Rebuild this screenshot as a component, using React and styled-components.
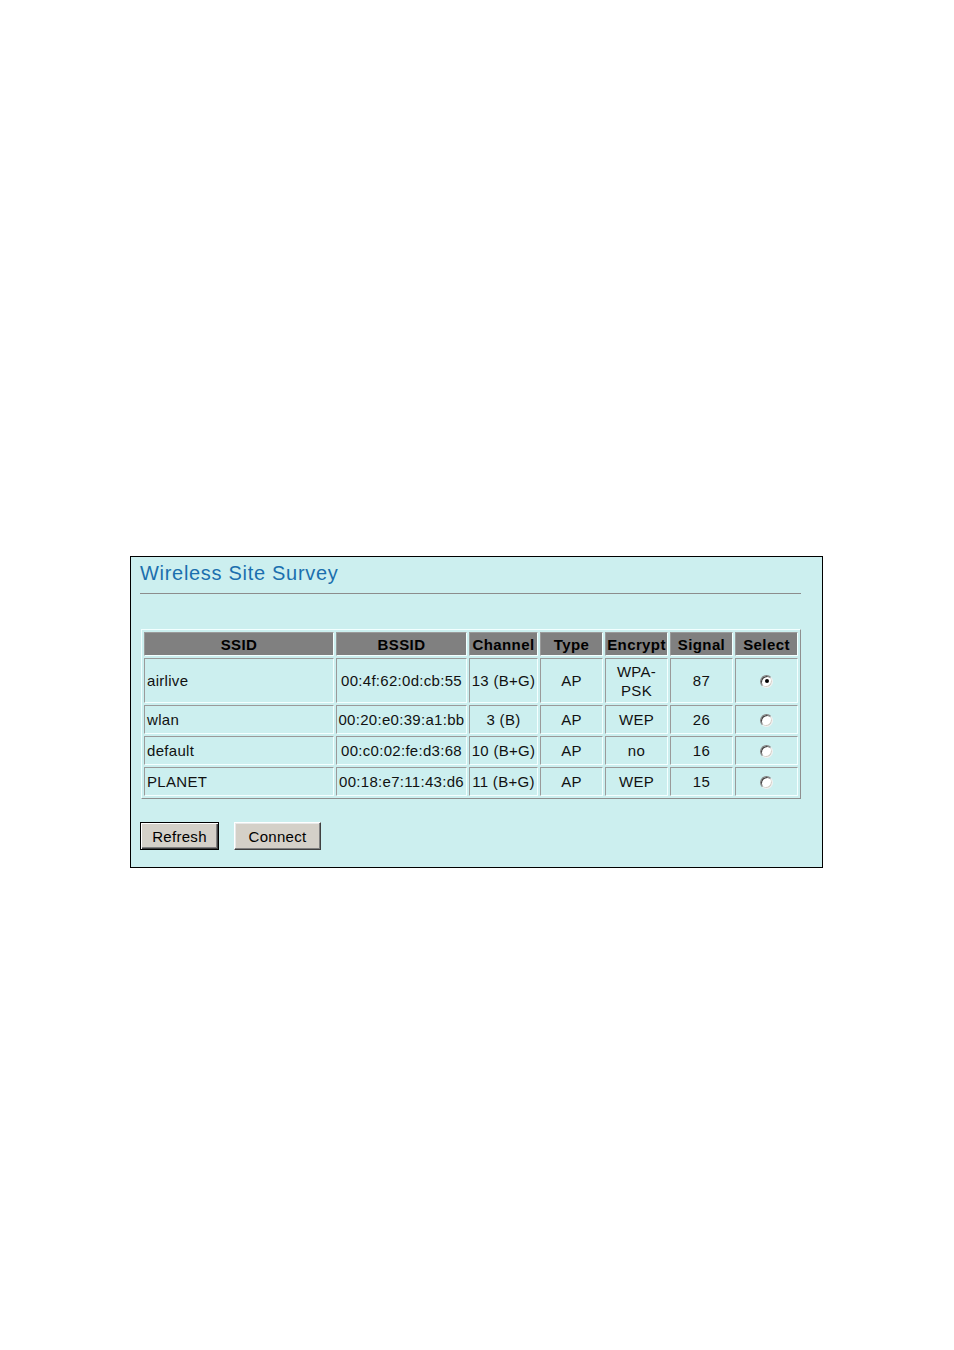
import styled, { createGlobalStyle, css } from "styled-components";

const GlobalStyle = createGlobalStyle`
  html, body {
    margin: 0;
    padding: 0;
    background: #ffffff;
  }
  body {
    font-family: "Liberation Sans", Arial, sans-serif;
  }
`;

const Page = styled.div`
  width: 954px;
  height: 1350px;
  padding: 556px 0 0 130px;
  box-sizing: border-box;
`;

const Panel = styled.section`
  width: 693px;
  height: 312px;
  box-sizing: border-box;
  border: 1px solid #000;
  background: #ccefef;
  padding: 4px 21px 0 9px;
`;

const Title = styled.h1`
  margin: 0;
  font-size: 20px;
  line-height: 24px;
  font-weight: normal;
  letter-spacing: 0.7px;
  color: #1b6fae;
`;

const Rule = styled.div`
  margin-top: 8px;
  height: 1px;
  background: #8c8c8c;
`;

const Table = styled.table`
  margin: 35px 0 0 1px;
  border-collapse: separate;
  border-spacing: 2px;
  table-layout: fixed;
  border: 1px solid;
  border-color: #f2ffff #8f8f8f #8f8f8f #f2ffff;
`;

const cellBase = css`
  box-sizing: border-box;
  border: 1px solid;
  border-color: #9a9a9a #f4ffff #f4ffff #9a9a9a;
  padding: 0 3px;
  vertical-align: middle;
  color: #000;
  white-space: nowrap;
`;

const HeadCell = styled.th`
  ${cellBase};
  width: ${p => p.$w}px;
  height: 24px;
  background: #808080;
  font-size: 15px;
  font-weight: bold;
  letter-spacing: 0.4px;
  text-align: center;
  padding: 0 1px;
`;

const Cell = styled.td`
  ${cellBase};
  height: ${p => (p.$tall ? 45 : 29)}px;
  font-size: 15px;
  letter-spacing: 0.3px;
  line-height: 19px;
  color: #111;
  text-align: ${p => (p.$left ? "left" : "center")};
  padding: ${p => (p.$left ? "0 3px 0 2px" : p.$tight ? "0 1px" : "0 3px")};
  white-space: ${p => (p.$wrap ? "normal" : "nowrap")};
`;

const Radio = styled.span`
  display: inline-block;
  position: relative;
  top: -1px;
  width: 13px;
  height: 13px;
  box-sizing: border-box;
  border-radius: 50%;
  background: #fff;
  border: 1px solid;
  border-color: #808080 #f0f0f0 #f0f0f0 #808080;
  box-shadow: inset 1px 1px 0 #404040, inset -1px -1px 0 #d4d0c8;
  vertical-align: middle;

  &::after {
    content: "";
    display: ${p => (p.$on ? "block" : "none")};
    position: absolute;
    left: 3.5px;
    top: 3.5px;
    width: 4px;
    height: 4px;
    border-radius: 50%;
    background: #000;
  }
`;

const Buttons = styled.div`
  display: flex;
  gap: 15px;
  margin-top: 23px;
`;

const Button = styled.button`
  height: 28px;
  width: ${p => p.$w}px;
  box-sizing: border-box;
  padding: 0;
  background: #d4d0c8;
  font-family: "Liberation Sans", Arial, sans-serif;
  font-size: 15px;
  letter-spacing: 0.3px;
  color: #000;
  border: 1px solid;
  border-color: #ffffff #404040 #404040 #ffffff;
  box-shadow: inset -1px -1px 0 #808080, inset 1px 1px 0 #e8e8e8;
  ${p =>
    p.$default &&
    css`
      border: 1px solid #000;
      box-shadow: inset 1px 1px 0 #ffffff, inset -1px -1px 0 #404040,
        inset -2px -2px 0 #808080;
    `}
`;

const columns = [
  ["SSID", 190],
  ["BSSID", 131],
  ["Channel", 69],
  ["Type", 63],
  ["Encrypt", 63],
  ["Signal", 63],
  ["Select", 63],
];

const networks = [
  { ssid: "airlive", bssid: "00:4f:62:0d:cb:55", ch: "13 (B+G)", type: "AP", enc: "WPA-PSK", sig: "87", on: true, tall: true },
  { ssid: "wlan", bssid: "00:20:e0:39:a1:bb", ch: "3 (B)", type: "AP", enc: "WEP", sig: "26" },
  { ssid: "default", bssid: "00:c0:02:fe:d3:68", ch: "10 (B+G)", type: "AP", enc: "no", sig: "16" },
  { ssid: "PLANET", bssid: "00:18:e7:11:43:d6", ch: "11 (B+G)", type: "AP", enc: "WEP", sig: "15" },
];

export default function App() {
  return (
    <Page>
      <GlobalStyle />
      <Panel>
        <Title>Wireless Site Survey</Title>
        <Rule />
        <Table>
          <thead>
            <tr>
              {columns.map(([name, w]) => (
                <HeadCell key={name} $w={w}>
                  {name}
                </HeadCell>
              ))}
            </tr>
          </thead>
          <tbody>
            {networks.map(n => (
              <tr key={n.bssid}>
                <Cell $left $tall={n.tall}>{n.ssid}</Cell>
                <Cell $tight $tall={n.tall}>{n.bssid}</Cell>
                <Cell $tight $tall={n.tall}>{n.ch}</Cell>
                <Cell $tall={n.tall}>{n.type}</Cell>
                <Cell $wrap $tall={n.tall}>
                  {n.enc === "WPA-PSK" ? (
                    <>
                      WPA-
                      <br />
                      PSK
                    </>
                  ) : (
                    n.enc
                  )}
                </Cell>
                <Cell $tall={n.tall}>{n.sig}</Cell>
                <Cell $tall={n.tall}>
                  <Radio $on={n.on} />
                </Cell>
              </tr>
            ))}
          </tbody>
        </Table>
        <Buttons>
          <Button $w={79} $default>
            Refresh
          </Button>
          <Button $w={87}>Connect</Button>
        </Buttons>
      </Panel>
    </Page>
  );
}
